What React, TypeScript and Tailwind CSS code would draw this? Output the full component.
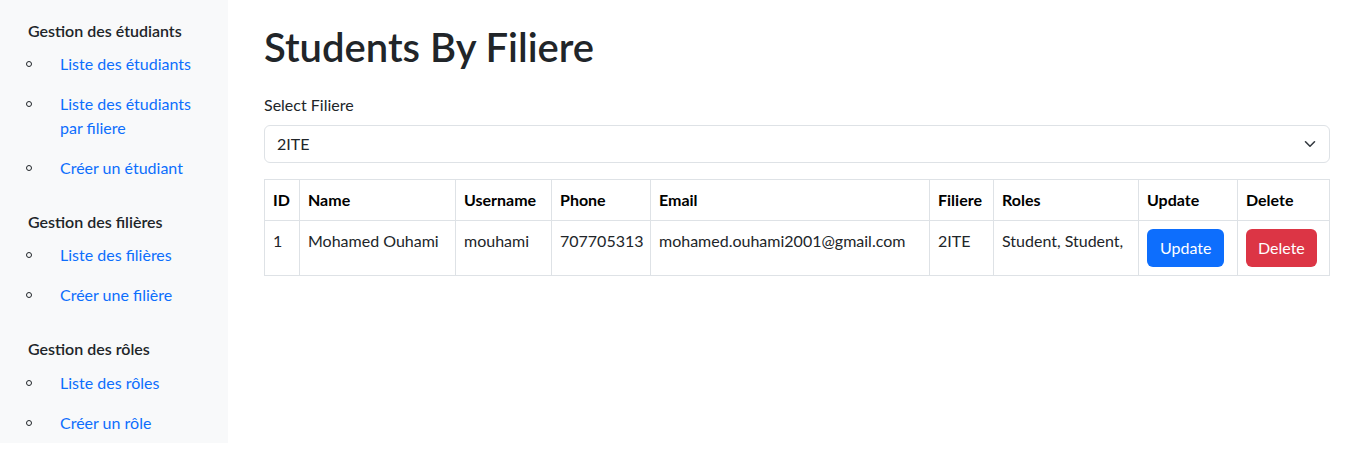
import React from 'react';

interface NavGroup {
  title: string;
  links: string[];
}

const NAV: NavGroup[] = [
  { title: 'Gestion des étudiants', links: ['Liste des étudiants', 'Liste des étudiants par filiere', 'Créer un étudiant'] },
  { title: 'Gestion des filières', links: ['Liste des filières', 'Créer une filière'] },
  { title: 'Gestion des rôles', links: ['Liste des rôles', 'Créer un rôle'] },
];

const COLUMNS = [
  { label: 'ID', width: 'w-[35px]' },
  { label: 'Name', width: 'w-[156px]' },
  { label: 'Username', width: 'w-[96px]' },
  { label: 'Phone', width: 'w-[99px]' },
  { label: 'Email', width: 'w-[279px]' },
  { label: 'Filiere', width: 'w-[64px]' },
  { label: 'Roles', width: 'w-[145px]' },
  { label: 'Update', width: 'w-[99px]' },
  { label: 'Delete', width: 'w-[92px]' },
];

const STUDENTS = [
  {
    id: 1,
    name: 'Mohamed Ouhami',
    username: 'mouhami',
    phone: '707705313',
    email: 'mohamed.ouhami2001@gmail.com',
    filiere: '2ITE',
    roles: 'Student, Student,',
  },
];

const Sidebar: React.FC = () => (
  <aside className="w-[228px] shrink-0 self-start bg-[#f8f9fa] pt-[21px] pb-[8px]">
    {NAV.map((group, gi) => (
      <div key={group.title} className={gi > 0 ? 'pt-[16px]' : ''}>
        <h6 className="pl-[28px] text-[16px] leading-[20px] font-semibold text-[#212529]">{group.title}</h6>
        <ul className={`flex flex-col gap-[16px] ${gi === NAV.length - 1 ? 'mt-[12px]' : 'mt-[11px]'}`}>
          {group.links.map((link) => (
            <li key={link} className="flex items-start">
              <span className="flex h-6 w-[60px] shrink-0 items-center pl-[26px]">
                <span className="h-[6px] w-[6px] rounded-full border border-[#212529]" />
              </span>
              <a href="#" className="pr-4 text-[16px] leading-6 text-[#0d6efd]">
                {link}
              </a>
            </li>
          ))}
        </ul>
        {gi < NAV.length - 1 && <div className="h-[16px]" />}
      </div>
    ))}
  </aside>
);

export default function App() {
  return (
    <div className="flex min-h-[472px] bg-white font-['Lato',sans-serif] text-[#212529]">
      <Sidebar />

      <main className="flex-1 pl-[36px] pr-[37px] pt-[23px]">
        <h1 className="text-[40px] leading-[48px] font-semibold">Students By Filiere</h1>

        <label className="mt-[22px] block text-[16px] leading-6">Select Filiere</label>
        <div className="relative mt-[8px]">
          <select className="h-[38px] w-full appearance-none rounded-[6px] border border-[#dee2e6] bg-white pl-[12px] pr-9 text-[16px] text-[#212529] outline-none">
            <option>2ITE</option>
          </select>
          <svg
            className="pointer-events-none absolute right-[14px] top-1/2 h-[8px] w-[12px] -translate-y-1/2"
            viewBox="0 0 12 8"
            fill="none"
            stroke="#343a40"
            strokeWidth="1.6"
            strokeLinecap="round"
            strokeLinejoin="round"
          >
            <path d="M1.5 1.8 6 6.2l4.5-4.4" />
          </svg>
        </div>

        <table className="mt-[16px] w-full table-fixed border-collapse border border-[#dee2e6] text-[16px] leading-6">
          <thead>
            <tr>
              {COLUMNS.map((col) => (
                <th
                  key={col.label}
                  className={`${col.width} border border-[#dee2e6] px-[8px] py-[8px] text-left font-bold text-black`}
                >
                  {col.label}
                </th>
              ))}
            </tr>
          </thead>
          <tbody>
            {STUDENTS.map((s) => (
              <tr key={s.id}>
                <td className="border border-[#dee2e6] px-[8px] py-[8px] align-top">{s.id}</td>
                <td className="border border-[#dee2e6] px-[8px] py-[8px] align-top">{s.name}</td>
                <td className="border border-[#dee2e6] px-[8px] py-[8px] align-top">{s.username}</td>
                <td className="border border-[#dee2e6] px-[8px] py-[8px] align-top">{s.phone}</td>
                <td className="border border-[#dee2e6] px-[8px] py-[8px] align-top">{s.email}</td>
                <td className="border border-[#dee2e6] px-[8px] py-[8px] align-top">{s.filiere}</td>
                <td className="border border-[#dee2e6] px-[8px] py-[8px] align-top">{s.roles}</td>
                <td className="border border-[#dee2e6] px-[8px] py-[8px] align-top">
                  <button className="h-[38px] rounded-[6px] bg-[#0d6efd] px-[13px] text-[16px] text-white">Update</button>
                </td>
                <td className="border border-[#dee2e6] px-[8px] py-[8px] align-top">
                  <button className="h-[38px] rounded-[6px] bg-[#dc3545] px-[12px] text-[16px] text-white">Delete</button>
                </td>
              </tr>
            ))}
          </tbody>
        </table>
      </main>
    </div>
  );
}
